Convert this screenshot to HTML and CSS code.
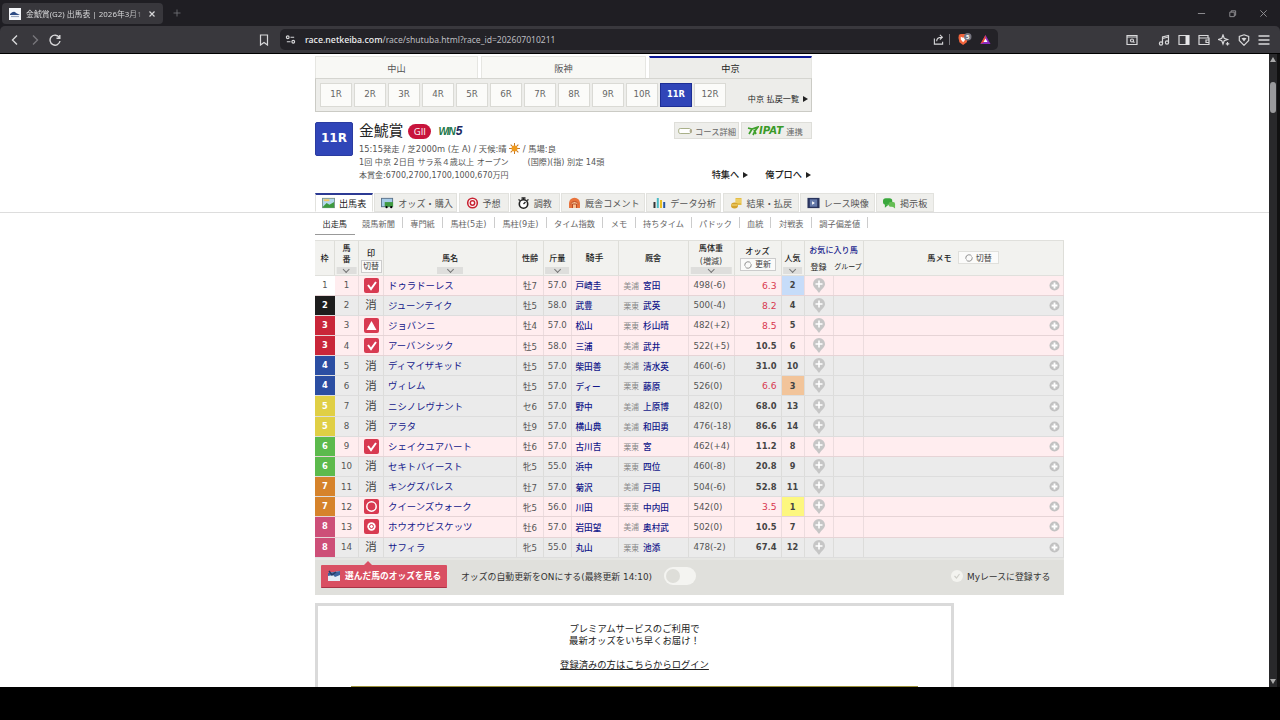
FILE: index.html
```html
<!DOCTYPE html>
<html lang="ja">
<head>
<meta charset="utf-8">
<title>金鯱賞(G2) 出馬表</title>
<link rel="stylesheet" href="styles.css">
</head>
<body>
<header class="browser">
  <div class="tabbar">
    <div class="tab">
      <svg class="favicon" viewBox="0 0 12 12"><rect width="12" height="12" fill="#f4f6fa"/><path d="M1 6Q5 2 7 5l4 2H1Z" fill="#2c4a83"/><path d="M2 8.500h8" stroke="#9aa8c0"/></svg>
      <span class="tab-title">金鯱賞(G2) 出馬表 | 2026年3月1</span>
      <svg class="tab-x" viewBox="0 0 8 8"><path d="M1.500 1.500l5 5m0-5l-5 5"/></svg>
    </div>
    <svg class="plus" viewBox="0 0 8 8"><path d="M4 0.500v7M0.500 4h7"/></svg>
    <div class="window-buttons">
      <svg viewBox="0 0 10 10"><path d="M1 5h8"/></svg>
      <svg viewBox="0 0 10 10"><path d="M2 3.500h5v5H2zM3.500 3.500V2h5v5H7"/></svg>
      <svg viewBox="0 0 10 10"><path d="M1.500 1.500l7 7m0-7l-7 7"/></svg>
    </div>
  </div>
  <div class="toolbar">
    <div class="nav-buttons">
      <svg viewBox="0 0 12 12"><path d="M8 1.500L3.500 6 8 10.500"/></svg>
      <svg class="dim" viewBox="0 0 12 12"><path d="M4 1.500L8.500 6 4 10.500"/></svg>
      <svg viewBox="0 0 12 12"><path d="M10.300 3.500A5 5 0 1 0 11 7M10.800 1v3.200H7.500"/></svg>
    </div>
    <svg class="bookmark" viewBox="0 0 12 12"><path d="M2.500 1h7v10L6 8.500 2.500 11z"/></svg>
    <div class="address">
      <svg class="site" viewBox="0 0 12 12"><circle cx="3" cy="3.500" r="1.500"/><path d="M6 3.500h4M2 8.500h4"/><circle cx="9" cy="8.500" r="1.500"/></svg>
      <span class="url"><b>race.netkeiba.com</b>/race/shutuba.html?race_id=202607010211</span>
      <svg class="share" viewBox="0 0 12 12"><path d="M1.500 5v6h9V8.500M4 8q0-4.500 5.500-4.500M7.500 1l2.700 2.500L7.500 6"/></svg>
      <i class="address-bar"></i>
      <svg class="shield" viewBox="0 0 16 14"><path d="M2 2l2-1h5l2 1 .5 3-1 5-4 3-4-3L1.500 5z" fill="#f0643c"/><path d="M4 4l2.500 1L9 4v3L6.500 10 4 7z" fill="#fff"/><circle cx="11.500" cy="4" r="4" fill="#777681"/><text x="9.700" y="6.500">5</text></svg>
      <svg class="bat" viewBox="0 0 12 12"><path d="M6 1L.5 11h11z" fill="#8b2ac1"/><path d="M6 1L.5 11 6 7.500z" fill="#f04a2a"/><path d="M6 5L3.800 8.800h4.400z" fill="#fff"/></svg>
    </div>
    <div class="extensions">
      <svg viewBox="0 0 12 12"><path d="M1 1.500h10v9H1zM1 3h10"/><circle cx="6" cy="6.500" r="1.500"/><path d="M7 7.500l1.500 1"/></svg>
      <svg class="after-gap" viewBox="0 0 12 12"><path d="M4.500 9.500V3l6-1.500v7M4.500 4.500l6-1.500"/><circle cx="3" cy="9.500" r="1.600"/><circle cx="9" cy="8.500" r="1.600"/></svg>
      <svg viewBox="0 0 12 12"><path d="M1 1.500h10v9H1z"/><path d="M7.500 1.500H11v9H7.500z" fill="#e8e8ea"/></svg>
      <svg viewBox="0 0 12 12"><path d="M10 4V1.500H1v9h10V4H1.500M11 6H8v2.500h3"/></svg>
      <svg viewBox="0 0 12 12"><path d="M5 1l1.200 3.300L9.500 5.500 6.200 6.700 5 10 3.800 6.700.5 5.500l3.300-1.200zM9.500 8v3.500M7.800 9.800h3.500"/></svg>
      <svg viewBox="0 0 12 12"><path d="M6 .8l4.700 1.700v4L6 11.300 1.300 6.500v-4z"/><path d="M3.500 4.200q2.500-1 5 0L6 7.500z" fill="#d8d8da"/></svg>
      <svg class="burger" viewBox="0 0 12 12"><path d="M.5 2h11M.5 6h11M.5 10h11"/></svg>
    </div>
  </div>
</header>

<div class="viewport">
<main class="page">
  <div class="venues"><div>中山</div><div>阪神</div><div class="on">中京</div></div>
  <div class="races">
    <span>1R</span><span>2R</span><span>3R</span><span>4R</span><span>5R</span><span>6R</span><span>7R</span><span>8R</span><span>9R</span><span>10R</span><span class="on">11R</span><span>12R</span>
    <a class="payout">中京 払戻一覧<i class="arrow"></i></a>
  </div>

  <section class="race-head">
    <div class="race-no">11R</div>
    <div class="race-info">
      <div class="title-row"><h1>金鯱賞</h1><span class="grade">GII</span><span class="win5">WIN<b>5</b></span></div>
      <p class="info-a">15:15発走 / 芝2000m (左 A) / 天候:晴 <svg class="sun" viewBox="0 0 12 12"><path d="M6 0v12M0 6h12M1.800 1.800l8.400 8.400m0-8.400l-8.400 8.400" stroke="#c87a24" stroke-width="1.100"/><circle cx="6" cy="6" r="3.200" fill="#f09a1c"/></svg> / 馬場:良</p>
      <p class="info-b"><span>1回 中京 2日目 サラ系４歳以上 オープン</span><span>(国際)(指) 別定 14頭</span></p>
      <p class="info-c">本賞金:6700,2700,1700,1000,670万円</p>
    </div>
    <div class="race-links">
      <div class="badges">
        <span class="badge course"><svg viewBox="0 0 15 8"><rect x=".7" y="1.500" width="12" height="5" rx="1.500" fill="#fff" stroke="#a9b089"/><path d="M11 4l3-2v4z" fill="#b0a98c"/></svg>コース詳細</span>
        <span class="badge ipat"><svg viewBox="0 0 12 10"><path d="M1 2l4 1 6-2-3 4-2 4M5 3L2 8M7 4l2 4" fill="none" stroke="#3fa02c" stroke-width="1.700"/></svg><b>IPAT</b> 連携</span>
      </div>
      <div class="more"><a>特集へ<i class="arrow"></i></a><a>俺プロへ<i class="arrow"></i></a></div>
    </div>
  </section>

  <nav class="menu">
    <a class="on m1"><svg viewBox="0 0 14 12"><rect x=".5" y="1" width="13" height="10" fill="#b5d8ec" stroke="#7d968d"/><path d="M1 10l4-4 3 2 5-3v6H1z" fill="#3c9a3e"/><path d="M2 3h6" stroke="#f3c75e" stroke-width="2"/></svg>出馬表</a>
    <a class="m2"><svg viewBox="0 0 14 12"><rect x=".5" y="1" width="12" height="9" fill="#a6cbe7" stroke="#59728b"/><path d="M4 5h9v5H4z" fill="#3f9940"/><circle cx="6" cy="10.500" r="1.200"/><circle cx="11" cy="10.500" r="1.200"/></svg>オッズ・購入</a>
    <a class="m3"><svg viewBox="0 0 12 12"><circle cx="6" cy="6" r="4.800" fill="#fff" stroke="#c82433" stroke-width="1.600"/><circle cx="6" cy="6" r="2.200" fill="#fff" stroke="#c82433" stroke-width="1.500"/></svg>予想</a>
    <a class="m4"><svg viewBox="0 0 12 12"><circle cx="6" cy="7" r="4.200" fill="#fff" stroke="#222" stroke-width="1.600"/><path d="M4 1h4M6 1v2M6 7l2-2M1 2.500l1.500 1M11 2.500l-1.500 1" stroke="#222" stroke-width="1.300"/></svg>調教</a>
    <a class="m5"><svg viewBox="0 0 12 12"><path d="M.5 11V6Q1 1 6 .8 11 1 11.500 6v5z" fill="#e8733c"/><path d="M2 7q4-5 8 0M4 11V7h4v4" fill="#f8c192" stroke="#b74c25"/></svg>厩舎コメント</a>
    <a class="m6"><svg viewBox="0 0 12 12"><path d="M1 11V5" stroke="#333" stroke-width="2"/><path d="M4.300 11V1" stroke="#4abac6" stroke-width="2"/><path d="M7.500 11V3" stroke="#e8be23" stroke-width="2"/><path d="M10.700 11V5" stroke="#2557a4" stroke-width="2"/></svg>データ分析</a>
    <a class="m7"><svg viewBox="0 0 12 12"><path d="M5 1h6v7H5z" fill="#e4bd45"/><ellipse cx="4" cy="8.500" rx="3.500" ry="3" fill="#d4a22b"/><path d="M5 3h6M5 5h6M1 8h6" stroke="#f7de83"/></svg>結果・払戻</a>
    <a class="m8"><svg viewBox="0 0 14 12"><rect x=".5" y=".5" width="13" height="11" fill="#29345d"/><rect x="3" y="2" width="8" height="8" fill="#6479aa"/><path d="M5.500 4v4l3-2z" fill="#fff"/></svg>レース映像</a>
    <a class="m9"><svg viewBox="0 0 14 12"><rect y="1" width="10" height="7" rx="3" fill="#3aa83c"/><path d="M2 7v4l4-3z" fill="#3aa83c"/><rect x="6" y="5" width="7" height="5" rx="2" fill="#65bd54"/><path d="M9 9l4 3V8z" fill="#65bd54"/></svg>掲示板</a>
  </nav>
  <nav class="submenu">
    <a class="on">出走馬</a><a>競馬新聞</a><a>専門紙</a><a>馬柱(5走)</a><a>馬柱(9走)</a><a>タイム指数</a><a>メモ</a><a>持ちタイム</a><a>パドック</a><a>血統</a><a>対戦表</a><a>調子偏差値</a>
  </nav>

  <section class="card">
    <div class="row head">
      <div>枠</div>
      <div class="stack"><span>馬</span><span>番</span><i class="sort"></i></div>
      <div class="stack mark-head"><span>印</span><span class="swap">切替</span></div>
      <div>馬名<i class="sort"></i></div>
      <div>性齢</div>
      <div>斤量<i class="sort"></i></div>
      <div class="wide">騎手</div>
      <div>厩舎</div>
      <div class="stack weight-head"><span>馬体重</span><span class="light">(増減)</span><i class="sort"></i></div>
      <div class="stack odds-head"><span>オッズ</span><span class="swap"><svg viewBox="0 0 10 10"><path d="M8.500 3A4 4 0 0 0 1 5v1M1.500 7A4 4 0 0 0 9 5V4"/></svg>更新</span></div>
      <div>人気<i class="sort"></i></div>
      <div class="favorite"><span class="fav-title">お気に入り馬</span><span>登録</span><span class="group">グループ</span></div>
      <div class="memo-head">馬メモ<span class="swap"><svg viewBox="0 0 10 10"><path d="M8.500 3A4 4 0 0 0 1 5v1M1.500 7A4 4 0 0 0 9 5V4"/></svg>切替</span></div>
    </div>
    <div id="entries"></div>
    <div class="card-foot">
      <a class="view-odds"><svg viewBox="0 0 14 12"><path d="M1 3l12-2v10H1z" fill="#e4edf7"/><path d="M1 3l12-2v4L8 7 6 5 1 6z" fill="#3c64a0"/><path d="M2 1l3 4 4-3" fill="none" stroke="#253b66" stroke-width="1.500"/></svg>選んだ馬のオッズを見る</a>
      <span class="auto">オッズの自動更新をONにする(最終更新 14:10)</span>
      <i class="toggle"></i>
      <span class="my-race"><svg viewBox="0 0 12 12"><circle cx="6" cy="6" r="6" fill="#f3f3ef"/><path d="M3.500 6l2 2 3-4" fill="none" stroke="#cfcfc9" stroke-width="1.200"/></svg>Myレースに登録する</span>
    </div>
  </section>

  <section class="premium">
    <p>プレミアムサービスのご利用で</p>
    <p>最新オッズをいち早くお届け！</p>
    <a>登録済みの方はこちらからログイン</a>
    <div class="gold"></div>
  </section>
</main>
<div class="scrollbar"><i class="up"></i><i class="thumb"></i><i class="down"></i></div>
</div>
<script src="entries.js"></script>
</body>
</html>
```

FILE: styles.css
```css
* { box-sizing: border-box; }
body { margin: 0; width: 1280px; height: 720px; overflow: hidden; background: #000; font-family: "DejaVu Sans", "Noto Sans CJK JP", sans-serif; color: #333; }
h1, p { margin: 0; font-weight: 400; }
svg { display: block; flex: none; }
a, span { white-space: nowrap; }

.browser { height: 54px; background: #1f1e23; border-bottom: 1px solid #000; font-family: "Noto Sans", "Noto Sans CJK JP", sans-serif; }
.browser svg { fill: none; stroke: #d8d8da; stroke-width: 1.2; }
.browser svg [fill] { stroke: none; }
.tabbar { height: 26px; display: flex; align-items: center; padding-left: 2px; }
.tab { width: 161px; height: 21px; margin-top: 1px; border-radius: 4px; background: #38373c; display: flex; align-items: center; padding: 0 6px 0 7px; color: #d7d7d9; font-size: 7.9px; }
.favicon { width: 12px; height: 12px; }
.tab-title { width: 117px; margin-left: 5px; -webkit-mask-image: linear-gradient(90deg, #000 88%, rgba(0,0,0,.3)); mask-image: linear-gradient(90deg, #000 88%, rgba(0,0,0,.3)); }
.tab-x { width: 8px; height: 8px; margin-left: 5px; }
.browser .plus { width: 8px; height: 8px; margin-left: 10px; stroke: #77767b; stroke-width: .8; }
.window-buttons { margin-left: auto; display: flex; gap: 22px; padding-right: 12px; }
.window-buttons svg { width: 9px; height: 9px; stroke: #96959a; stroke-width: 1; }
.toolbar { height: 27px; background: #39383d; border-radius: 5px 5px 0 0; display: flex; align-items: center; padding: 0 10px 0 9px; }
.nav-buttons { display: flex; gap: 8px; width: 249px; }
.nav-buttons svg { width: 12px; height: 12px; stroke-width: 1.4; }
.nav-buttons .dim { stroke: #77767b; }
.bookmark { width: 12px; height: 12px; }
.address { margin-left: 10px; width: 718px; height: 21px; border-radius: 5px; background: #232227; display: flex; align-items: center; padding: 0 7px 0 5px; }
.site, .share, .bat { width: 11px; height: 11px; }
.url { margin-left: 9px; font-size: 8.55px; color: #bdbdc0; }
.url b { font-weight: 500; font-size: 8.8px; color: #f0f0f1; }
.share { margin-left: auto; }
.address-bar { width: 1px; height: 11px; background: #77767b; margin: 0 7px 0 5px; }
.shield { width: 15px; height: 13px; }
.shield text { font-size: 6.5px; font-weight: 700; stroke: none; fill: #fff; }
.bat { margin-left: 8px; }
.extensions { margin-left: auto; display: flex; gap: 8px; }
.extensions svg { width: 12px; height: 12px; stroke-width: 1.2; }
.extensions .after-gap { margin-left: 12px; }
.extensions .burger { stroke-width: 1.5; }

.viewport { height: 633px; display: flex; overflow: hidden; background: #fff; }
.page { width: 1269px; padding: 2px 0 0 315px; overflow: hidden; background: linear-gradient(#ddd, #ddd) 0 158px / 100% 1px no-repeat #fff; }
.scrollbar { width: 8px; background: #29292b; display: flex; flex-direction: column; align-items: center; }
.viewport::after { content: ""; width: 3px; background: #111; }
.up, .down { border: 3px solid transparent; }
.up { border-bottom: 5px solid #aaa; margin-top: 0; }
.down { border-top: 5px solid #aaa; margin-top: auto; }
.thumb { width: 6px; height: 31px; margin-top: 20px; border-radius: 3px; background: #9a9a9c; }

.venues { width: 497px; height: 22px; display: grid; grid-template-columns: 163px 165px 163px; column-gap: 3px; }
.venues div { display: grid; place-items: center; background: #f8f8f5; border: 1px solid #e6e6e2; border-bottom: 0; font-size: 9.2px; color: #555; }
.venues .on { background: #ededea; border-top: 2px solid #0c1896; color: #222; }
.races { width: 497px; height: 34px; padding: 0 3px 0 4px; display: flex; align-items: center; gap: 2px; background: #ededea; border: 1px solid #cbcbc5; border-top-color: #d5d5d0; }
.races span { width: 32px; height: 24px; line-height: 21px; text-align: center; background: #fbfbf9; border: 1px solid #dadad5; font-size: 8.7px; color: #666; }
.races .on { background: #3045b8; border-color: #1d2e95; color: #fff; font-weight: 700; font-size: 8.3px; }
.payout { margin: 6px 0 0 auto; font-size: 8.1px; color: #222; }
.arrow { display: inline-block; border: solid transparent; border-width: 3px 0 3px 5px; border-left-color: #222; margin-left: 4px; }

.race-head { width: 497px; height: 81px; display: flex; padding-top: 10px; }
.race-no { width: 38px; height: 34px; background: #3045b8; border: 1px solid #2a3ba0; border-radius: 2px; color: #fff; font-weight: 700; font-size: 12px; line-height: 31px; text-align: center; }
.race-info { width: 320px; padding-left: 6px; color: #555; }
.title-row { height: 18px; display: flex; align-items: center; }
h1 { font-size: 14.8px; line-height: 18px; color: #222; }
.grade { margin-left: 5px; width: 23px; height: 15px; border-radius: 8px; background: #c8143c; color: #fff; font: 9.5px/15px "Open Sans", sans-serif; text-align: center; }
.win5 { margin-left: 7px; font: italic 700 10px/16px "Liberation Sans", sans-serif; color: #23784b; letter-spacing: -1px; }
.win5 b { color: #20285f; font-size: 12px; margin-left: 1px; }
.race-info p { font-size: 8.3px; white-space: nowrap; line-height: 13px; height: 13px; }
.race-info .info-a { margin-top: 3px; height: 13px; }
.sun { display: inline-block; width: 11px; height: 11px; vertical-align: -2px; }
.info-b { display: flex; gap: 19px; }
.race-info .info-b { font-size: 8.1px; }
.race-info .info-c { font-size: 8px; }
.race-links { flex: 1; display: flex; flex-direction: column; align-items: flex-end; }
.badges { display: flex; gap: 2px; }
.badge { height: 17px; border: 1px solid #deded9; background: #eeeeeb; display: flex; align-items: center; font-size: 8.3px; color: #666; }
.course { width: 65px; padding-left: 3px; }
.course svg { width: 15px; height: 8px; margin-right: 2px; }
.ipat { width: 71px; padding-left: 5px; }
.ipat svg { width: 12px; height: 10px; }
.ipat b { font-style: italic; font-size: 10.2px; line-height: 12px; color: #3a9a28; margin-right: 3px; }
.more { margin-top: 29px; padding-right: 1px; display: flex; gap: 17px; font-size: 9.2px; font-weight: 500; color: #222; line-height: 14px; }

.menu { height: 19px; margin-top: 0; display: flex; gap: 1.250px; }
.menu a { height: 19px; display: flex; align-items: center; gap: 4px; padding-left: 6px; background: #efefec; border: 1px solid #e2e2de; font-size: 9.1px; color: #555; }
.menu svg { height: 12px; width: 13px; }
.menu .on { background: #fff; border-top: 2px solid #2c3a94; border-bottom-color: #fff; color: #222; }
.m1 { width: 58px; } .m2 { width: 83px; } .m3 { width: 50px; } .m4 { width: 50px; } .m5 { width: 84px; } .m6 { width: 75px; } .m7 { width: 76px; } .m8 { width: 75px; } .m9 { width: 58px; }
.submenu { height: 22px; margin-top: 1px; display: grid; grid-template-columns: 39.500px 48px 40px 52px 52px 56px 33px 56px 48px 31.500px 40.500px 56.500px; font-size: 8.2px; color: #666; }
.submenu a { display: grid; place-items: center; height: 22px; padding-bottom: 3px; background: linear-gradient(#ccc, #ccc) 100% 40% / 1px 11px no-repeat; }
.submenu .on { color: #222; background: none; padding-bottom: 2px; border-bottom: 1px solid #999; }

.card { width: 748.5px; margin-top: 5px; }
.row { display: grid; grid-template-columns: 20px 24px 25px 133px 27px 27.500px 47px 70px 46px 47px 23px 29px 30px 200px; height: 20.16px; background: #ebebeb; border-bottom: 1px solid #ddd; }
.row > div { display: flex; align-items: center; justify-content: center; border-right: 1px solid #dcdcda; font-size: 8.7px; white-space: nowrap; min-width: 0; overflow: hidden; color: #555; }
.row.picked { background: #ffedef; border-bottom-color: #e6d4d6; }
.row.picked > div { border-right-color: #ecdcde; }
.row.head { height: 35.5px; background: #f2f2ef; border: 1px solid #e0e0dc; border-width: 1px 0 1px 0; }
.row.head > div { position: relative; font-size: 8.1px; font-weight: 500; color: #222; border-right-color: #deded9; }
.row.head .wide { font-size: 9px; }
.row.head .stack { flex-direction: column; justify-content: flex-start; padding-top: 2px; line-height: 11px; }
.sort { position: absolute; bottom: 1px; left: 50%; width: 26px; max-width: 90%; height: 7px; transform: translateX(-50%); background: #dededc; display: flex; justify-content: center; }
.weight-head .sort { width: 41px; }
.sort::after { content: ""; width: 4px; height: 4px; border: solid #777; border-width: 0 1px 1px 0; transform: rotate(45deg); }
.swap { display: flex; align-items: center; justify-content: center; gap: 3px; height: 13px; border: 1px solid #ccc; background: #fbfbfa; font-size: 8px; font-weight: 400; color: #444; }
.swap svg { width: 8px; height: 8px; fill: none; stroke: #777; }
.row.head .mark-head { padding-top: 7px; }
.mark-head .swap { width: 21px; margin-top: 1px; }
.row.head .weight-head { line-height: 13px; padding-top: 1px; }
.light { font-weight: 400; color: #444; }
.row.head .odds-head { padding-top: 5px; }
.odds-head .swap { width: 36px; margin-top: 1px; }
.row.head .favorite { grid-column: span 2; display: grid; grid-template: 17px 1fr / 29px 30px; justify-items: center; font-weight: 400; font-size: 8px; }
.fav-title { grid-column: 1 / 3; color: #1a1f8e; font-size: 8.1px; font-weight: 500; }
.group { font-size: 7px; }
.row.head .memo-head { gap: 6px; }
.memo-head .swap { width: 41px; border-color: #e0e0dc; }

.row .frame { color: #fff; font-weight: 700; font-size: 8.300px; border-right: 0; padding-bottom: 1px; }
.row .f1 { background: #fff; color: #555; font-weight: 400; }
.f2 { background: #1d1d1d; } .f3 { background: #c92639; } .f4 { background: #2b4ea2; } .f5 { background: #e0cf45; } .f6 { background: #5cba4c; } .f7 { background: #d6832b; } .f8 { background: #cd4f78; }
.row .erase { font-size: 11.500px; color: #444; padding-bottom: 2px; }
.mark { width: 15px; height: 15px; }
.row .name { justify-content: flex-start; padding: 0 0 1px 4px; font-size: 9.4px; color: #12178a; }
.row .jockey { justify-content: flex-start; padding-left: 4px; font-size: 8.600px; font-weight: 500; color: #12178a; }
.row .stable { justify-content: flex-start; padding-left: 5px; gap: 4px; font-size: 8.600px; font-weight: 500; color: #12178a; }
.stable span { font-size: 7.800px; font-weight: 400; color: #888; }
.row .age { font-size: 8.6px; }
.row .load { font-size: 8.6px; }
.row .weight { justify-content: flex-start; padding-left: 5px; }
.row .odds { justify-content: flex-end; padding-right: 4px; font-size: 8.4px; font-weight: 700; color: #444; }
.row .hot { color: #d83850; font-weight: 400; font-size: 9.2px; }
.row .rank { font-weight: 700; font-size: 8.2px; color: #444; }
.row .r1 { background: #fdf77f; } .row .r2 { background: #c6dcf9; } .row .r3 { background: #f2c49a; }
.pin { width: 12px; height: 15px; }
.row .memo { justify-content: flex-end; padding-right: 3px; }
.memo svg { width: 11px; height: 11px; }

.card-foot { height: 37px; background: #e0e0dc; display: flex; align-items: center; padding: 0 13px 2px 6px; border-top: 2px solid #e6e6e3; color: #333; font-size: 8.9px; }
.view-odds { position: relative; width: 126px; height: 23px; background: #d94f62; border-bottom: 1px solid #a93346; border-radius: 1px; color: #fff; font-size: 8.75px; font-weight: 700; display: flex; align-items: center; gap: 4px; padding-left: 6px; }
.view-odds::before { content: ""; position: absolute; left: 43px; top: -4px; border: solid transparent; border-width: 0 4px 4px; border-bottom-color: #d94f62; }
.view-odds svg { width: 14px; height: 12px; }
.auto { margin-left: 14px; }
.toggle { width: 32px; height: 18px; margin-left: 12px; border-radius: 9px; background: #f4f4f1; padding: 2px; }
.toggle::before { content: ""; display: block; width: 14px; height: 14px; border-radius: 50%; background: #deded9; }
.my-race { margin-left: auto; display: flex; align-items: center; gap: 4px; }
.my-race svg { width: 12px; height: 12px; }

.premium { width: 639px; height: 110px; margin-top: 8px; border: 3px solid #dadada; padding-top: 17px; text-align: center; font-size: 9.35px; line-height: 12px; color: #222; }
.premium a { display: inline-block; margin-top: 12px; font-size: 9.3px; text-decoration: underline; }
.gold { width: 567px; height: 20px; margin: 15px 0 0 33px; background: #9a8f38; }
```

FILE: entries.js
```js
const entries = [
  [1, 'check', 'ドゥラドーレス', '牡7', '57.0', '戸崎圭', '美浦', '宮田', '498(-6)', '6.3', 2],
  [2, 'erase', 'ジューンテイク', '牡5', '58.0', '武豊', '栗東', '武英', '500(-4)', '8.2', 4],
  [3, 'triangle', 'ジョバンニ', '牡4', '57.0', '松山', '栗東', '杉山晴', '482(+2)', '8.5', 5],
  [3, 'check', 'アーバンシック', '牡5', '58.0', '三浦', '美浦', '武井', '522(+5)', '10.5', 6],
  [4, 'erase', 'ディマイザキッド', '牡5', '57.0', '柴田善', '美浦', '清水英', '460(-6)', '31.0', 10],
  [4, 'erase', 'ヴィレム', '牡5', '57.0', 'ディー', '栗東', '藤原', '526(0)', '6.6', 3],
  [5, 'erase', 'ニシノレヴナント', 'セ6', '57.0', '野中', '美浦', '上原博', '482(0)', '68.0', 13],
  [5, 'erase', 'アラタ', '牡9', '57.0', '横山典', '美浦', '和田勇', '476(-18)', '86.6', 14],
  [6, 'check', 'シェイクユアハート', '牡6', '57.0', '古川吉', '栗東', '宮', '462(+4)', '11.2', 8],
  [6, 'erase', 'セキトバイースト', '牝5', '55.0', '浜中', '栗東', '四位', '460(-8)', '20.8', 9],
  [7, 'erase', 'キングズパレス', '牡7', '57.0', '菊沢', '美浦', '戸田', '504(-6)', '52.8', 11],
  [7, 'circle', 'クイーンズウォーク', '牝5', '56.0', '川田', '栗東', '中内田', '542(0)', '3.5', 1],
  [8, 'double', 'ホウオウビスケッツ', '牡6', '57.0', '岩田望', '美浦', '奥村武', '502(0)', '10.5', 7],
  [8, 'erase', 'サフィラ', '牝5', '55.0', '丸山', '栗東', '池添', '478(-2)', '67.4', 12]
];

const shapes = {
  check: '<path d="M4 7l3 4 5-7" fill="none" stroke="#fff" stroke-width="2"/>',
  triangle: '<path d="M7.500 3l5 9h-10z" fill="#fff"/>',
  circle: '<circle cx="7.500" cy="7.500" r="4.700" fill="none" stroke="#fff" stroke-width="1.500"/>',
  double: '<circle cx="7.500" cy="7.500" r="4.200" fill="#fff"/><circle cx="7.500" cy="7.500" r="2" fill="none" stroke="#d83a51"/>'
};
const mark = type => type === 'erase' ? '消'
  : `<svg class="mark" viewBox="0 0 15 15"><rect width="15" height="15" rx="2" fill="#d83a51"/>${shapes[type]}</svg>`;
const pin = '<svg class="pin" viewBox="0 0 12 15"><path d="M6 0a6 6 0 0 1 6 6c0 3-3 4.500-6 9C3 10.500 0 9 0 6a6 6 0 0 1 6-6z" fill="#c6c6c6"/><path d="M6 2.500v7M2.500 6h7" stroke="#fff" stroke-width="1.600"/></svg>';
const add = '<svg viewBox="0 0 12 12"><circle cx="6" cy="6" r="5.500" fill="#c2c2c2"/><path d="M6 2.800v6.400M2.800 6h6.400" stroke="#fff" stroke-width="2"/></svg>';

document.getElementById('entries').innerHTML = entries.map((e, i) => {
  const [frame, type, name, age, load, jockey, base, trainer, weight, odds, rank] = e;
  return `<div class="row ${type === 'erase' ? '' : 'picked'}">
    <div class="frame f${frame}">${frame}</div><div>${i + 1}</div><div class="${type}">${mark(type)}</div>
    <div class="name">${name}</div><div class="age">${age}</div><div class="load">${load}</div>
    <div class="jockey">${jockey}</div><div class="stable"><span>${base}</span>${trainer}</div>
    <div class="weight">${weight}</div><div class="odds ${odds < 10 ? 'hot' : ''}">${odds}</div>
    <div class="rank r${rank}">${rank}</div><div>${pin}</div><div></div><div class="memo">${add}</div>
  </div>`;
}).join('');
```
